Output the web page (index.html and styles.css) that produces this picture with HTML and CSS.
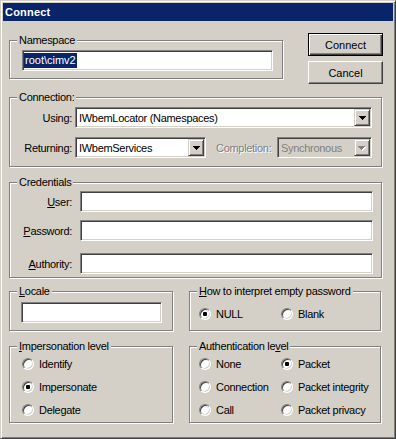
FILE: index.html
```html
<!DOCTYPE html>
<html lang="en">
<head>
    <meta charset="UTF-8">
    <title>Connect</title>
    <link rel="stylesheet" href="styles.css">
</head>
<body>
    <div class="window">
        <div class="titlebar">Connect</div>

        <div class="dialog">
            <!-- Namespace + buttons -->
            <div class="row row-top">
                <div class="group group-namespace">
                    <span class="group-label">Namespace</span>
                    <div class="edit edit-namespace"><span class="selected">root\cimv2</span></div>
                </div>
                <div class="buttons">
                    <button class="button button-default">Connect</button>
                    <button class="button">Cancel</button>
                </div>
            </div>

            <!-- Connection -->
            <div class="group group-connection">
                <span class="group-label">Connection:</span>
                <div class="field-row">
                    <span class="field-label">Using:</span>
                    <div class="combo combo-using">
                        <span class="combo-text">IWbemLocator (Namespaces)</span>
                        <span class="combo-button"><svg width="7" height="4" viewBox="0 0 7 4"><path d="M0 0h7v1H0zM1 1h5v1H1zM2 2h3v1H2zM3 3h1v1H3z" fill="#000"/></svg></span>
                    </div>
                </div>
                <div class="field-row field-row-returning">
                    <span class="field-label">Returning:</span>
                    <div class="combo combo-returning">
                        <span class="combo-text">IWbemServices</span>
                        <span class="combo-button"><svg width="7" height="4" viewBox="0 0 7 4"><path d="M0 0h7v1H0zM1 1h5v1H1zM2 2h3v1H2zM3 3h1v1H3z" fill="#000"/></svg></span>
                    </div>
                    <span class="field-label label-completion">Completion:</span>
                    <div class="combo combo-completion disabled">
                        <span class="combo-text">Synchronous</span>
                        <span class="combo-button"><svg width="8" height="5" viewBox="0 0 8 5"><path d="M1 1h7v1H1zM2 2h5v1H2zM3 3h3v1H3zM4 4h1v1H4z" fill="#fff"/><path d="M0 0h7v1H0zM1 1h5v1H1zM2 2h3v1H2zM3 3h1v1H3z" fill="#808080"/></svg></span>
                    </div>
                </div>
            </div>

            <!-- Credentials -->
            <div class="group group-credentials">
                <span class="group-label">Credentials</span>
                <div class="field-row">
                    <span class="field-label cred-label"><u>U</u>ser:</span>
                    <div class="edit edit-cred"></div>
                </div>
                <div class="field-row field-row-password">
                    <span class="field-label cred-label"><u>P</u>assword:</span>
                    <div class="edit edit-cred"></div>
                </div>
                <div class="field-row field-row-authority">
                    <span class="field-label cred-label"><u>A</u>uthority:</span>
                    <div class="edit edit-cred"></div>
                </div>
            </div>

            <!-- Locale + empty password -->
            <div class="row row-locale">
                <div class="group group-locale">
                    <span class="group-label"><u>L</u>ocale</span>
                    <div class="edit edit-locale"></div>
                </div>
                <div class="group group-empty">
                    <span class="group-label"><u>H</u>ow to interpret empty password</span>
                    <div class="options options-two">
                        <div class="option"><span class="radio checked"></span>NULL</div>
                        <div class="option"><span class="radio"></span>Blank</div>
                    </div>
                </div>
            </div>

            <!-- Impersonation + authentication -->
            <div class="row row-levels">
                <div class="group group-impersonation">
                    <span class="group-label"><u>I</u>mpersonation level</span>
                    <div class="options options-one">
                        <div class="option"><span class="radio"></span>Identify</div>
                        <div class="option"><span class="radio checked"></span>Impersonate</div>
                        <div class="option"><span class="radio"></span>Delegate</div>
                    </div>
                </div>
                <div class="group group-authentication">
                    <span class="group-label">Authentication le<u>v</u>el</span>
                    <div class="options options-two">
                        <div class="option"><span class="radio"></span>None</div>
                        <div class="option"><span class="radio checked"></span>Packet</div>
                        <div class="option"><span class="radio"></span>Connection</div>
                        <div class="option"><span class="radio"></span>Packet integrity</div>
                        <div class="option"><span class="radio"></span>Call</div>
                        <div class="option"><span class="radio"></span>Packet privacy</div>
                    </div>
                </div>
            </div>
        </div>
    </div>
</body>
</html>
```

FILE: styles.css
```css
body {
    margin: 0;
    background-color: #d4d0c8;
    font-family: 'Liberation Sans', Arial, sans-serif;
    font-size: 11px;
    letter-spacing: -0.3px;
    color: #000;
}

/* Window frame */
.window {
    width: 396px;
    height: 439px;
    box-sizing: border-box;
    padding: 2px;
    background-color: #d4d0c8;
    border: 1px solid;
    border-color: #d4d0c8 #404040 #404040 #d4d0c8;
    box-shadow: inset 1px 1px 0 #fff, inset -1px -1px 0 #808080;
}

.titlebar {
    height: 18px;
    line-height: 18px;
    padding-left: 2px;
    background-color: #0a246a;
    color: #fff;
    font-weight: bold;
    letter-spacing: 0.2px;
}

.dialog {
    padding: 12px 0 0 6px;
}

.row {
    display: flex;
    align-items: flex-start;
}

/* Etched group boxes */
.group {
    position: relative;
    box-sizing: border-box;
    border: 1px solid #808080;
    box-shadow: inset 1px 1px 0 #fff, 1px 1px 0 #fff;
}

.group-label {
    position: absolute;
    top: -7px;
    left: 7px;
    padding: 0 2px;
    line-height: 12px;
    background-color: #d4d0c8;
    white-space: nowrap;
}

.group-namespace {
    margin-top: 7px;
    width: 274px;
    height: 39px;
    padding: 9px 0 0 12px;
}

.group-connection {
    margin-top: 13px;
    width: 373px;
    height: 70px;
    padding-top: 9px;
}

.group-credentials {
    margin-top: 15px;
    width: 373px;
    height: 96px;
    padding-top: 8px;
}

.row-locale {
    margin-top: 13px;
    gap: 16px;
}

.group-locale {
    width: 164px;
    height: 40px;
    padding: 10px 0 0 11px;
}

.group-empty {
    width: 192px;
    height: 40px;
    padding: 16px 0 0 9px;
}

.row-levels {
    margin-top: 15px;
    gap: 16px;
}

.group-impersonation {
    width: 164px;
    height: 77px;
    padding: 11px 0 0 12px;
}

.group-authentication {
    width: 192px;
    height: 77px;
    padding: 11px 0 0 9px;
}

/* Buttons */
.buttons {
    display: flex;
    flex-direction: column;
    gap: 5px;
    margin-left: 25px;
}

.button {
    width: 75px;
    height: 23px;
    box-sizing: border-box;
    padding: 0;
    background-color: #d4d0c8;
    font: inherit;
    color: #000;
    border: 1px solid;
    border-color: #fff #404040 #404040 #fff;
    box-shadow: inset -1px -1px 0 #808080;
}

.button-default {
    border-color: #000;
    box-shadow: inset 1px 1px 0 #fff, inset -1px -1px 0 #404040, inset -2px -2px 0 #808080;
}

/* Sunken edit fields */
.edit {
    box-sizing: border-box;
    height: 21px;
    background-color: #fff;
    border: 1px solid;
    border-color: #808080 #fff #fff #808080;
    box-shadow: inset 1px 1px 0 #404040, inset -1px -1px 0 #d4d0c8;
}

.edit-namespace {
    width: 251px;
    padding: 2px 0 0 1px;
}

.selected {
    display: inline-block;
    height: 15px;
    line-height: 15px;
    padding: 0 1px;
    letter-spacing: 0;
    background-color: #0a246a;
    color: #fff;
}

.edit-cred {
    width: 293px;
}

.edit-locale {
    width: 141px;
}

/* Label + control rows */
.field-row {
    display: flex;
    align-items: center;
}

.field-label {
    width: 62px;
    margin-right: 3px;
    text-align: right;
    white-space: nowrap;
}

.cred-label {
    margin-right: 8px;
}

.field-row-returning {
    margin-top: 9px;
}

.field-row-password {
    margin-top: 8px;
}

.field-row-authority {
    margin-top: 12px;
}

.label-completion {
    width: 58px;
    padding-left: 10px;
    text-align: left;
    color: #808080;
    text-shadow: 1px 1px 0 #fff;
}

/* Combo boxes */
.combo {
    display: flex;
    align-items: center;
    box-sizing: border-box;
    height: 21px;
    padding: 1px;
    background-color: #fff;
    border: 1px solid;
    border-color: #808080 #fff #fff #808080;
    box-shadow: inset 1px 1px 0 #404040, inset -1px -1px 0 #d4d0c8;
}

.combo-using {
    width: 297px;
}

.combo-returning {
    width: 131px;
}

.combo-completion {
    width: 95px;
}

.combo.disabled {
    background-color: #d4d0c8;
    color: #808080;
}

.combo-text {
    flex: 1;
    padding-left: 2px;
    white-space: nowrap;
    overflow: hidden;
}

.combo-button {
    display: flex;
    align-items: center;
    justify-content: center;
    width: 16px;
    height: 17px;
    box-sizing: border-box;
    padding-top: 1px;
    background-color: #d4d0c8;
    border: 1px solid;
    border-color: #d4d0c8 #404040 #404040 #d4d0c8;
    box-shadow: inset 1px 1px 0 #fff, inset -1px -1px 0 #808080;
}

/* Radio buttons */
.options {
    display: grid;
    row-gap: 11px;
}

.options-one {
    grid-template-columns: auto;
}

.options-two {
    grid-template-columns: 82px auto;
}

.option {
    display: flex;
    align-items: center;
    gap: 5px;
    height: 12px;
    line-height: 12px;
    white-space: nowrap;
}

.radio {
    position: relative;
    flex: none;
    width: 12px;
    height: 12px;
    box-sizing: border-box;
    border-radius: 50%;
    background-color: #fff;
    border: 1px solid;
    border-color: #808080 #fff #fff #808080;
    box-shadow: inset 1px 1px 0 #404040, inset -1px -1px 0 #d4d0c8;
}

.radio.checked::after {
    content: "";
    position: absolute;
    left: 3px;
    top: 3px;
    width: 4px;
    height: 4px;
    border-radius: 1px;
    background-color: #000;
}
```
